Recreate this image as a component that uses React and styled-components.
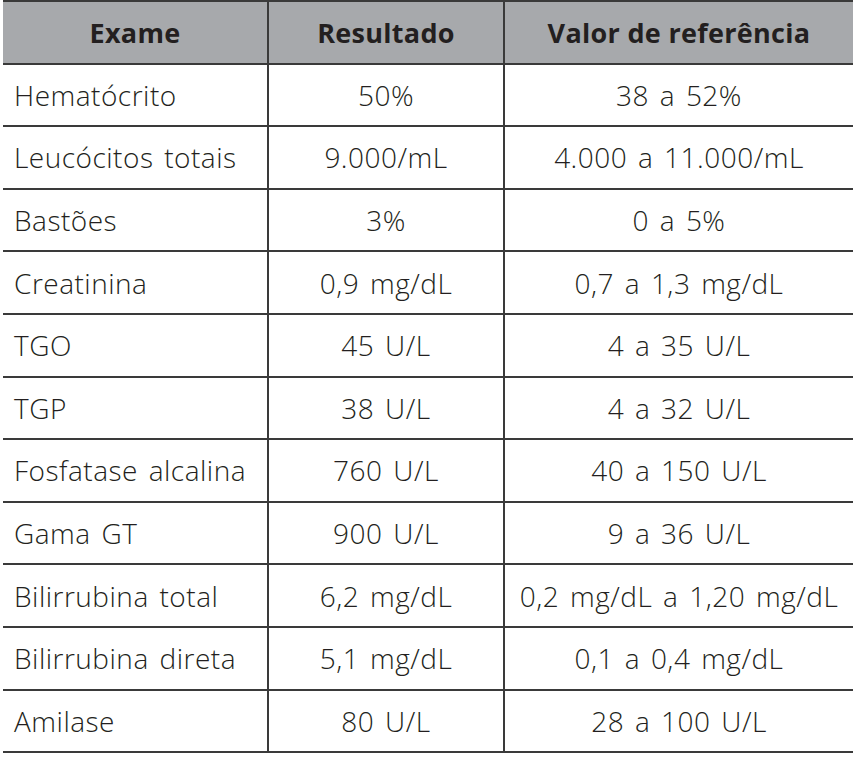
import React from "react";
import styled, { createGlobalStyle } from "styled-components";

const Global = createGlobalStyle`
  html, body { margin: 0; padding: 0; background: #ffffff; }
  body { font-family: "Open Sans", "Liberation Sans", sans-serif; color: #231f20; }
`;

const Table = styled.table`
  margin-left: 3px;
  width: 850px;
  border-collapse: collapse;
  table-layout: fixed;
  border-top: 2px solid #3a3a3a;
`;

const Row = styled.tr`
  height: 62.6px;
  border-bottom: 2px solid #3a3a3a;
  background: ${(p) => (p.$head ? "#a7a9ac" : "#ffffff")};
`;

const HeadCell = styled.th`
  padding: 0;
  font-size: 27px;
  font-weight: 700;
  color: #231f20;
  text-align: center;
  vertical-align: middle;
  border-left: ${(p) => (p.$first ? "none" : "2px solid #3a3a3a")};
  letter-spacing: 0.3px;
`;

const Cell = styled.td`
  padding: 0 0 0 ${(p) => (p.$first ? "11px" : "0")};
  font-size: 28px;
  font-weight: 350;
  color: #231f20;
  text-align: ${(p) => (p.$first ? "left" : "center")};
  vertical-align: middle;
  white-space: nowrap;
  border-left: ${(p) => (p.$first ? "none" : "2px solid #3a3a3a")};
  letter-spacing: 0.5px;
  word-spacing: 3px;
`;

const rows = [
  ["Hematócrito", "50%", "38 a 52%"],
  ["Leucócitos totais", "9.000/mL", "4.000 a 11.000/mL"],
  ["Bastões", "3%", "0 a 5%"],
  ["Creatinina", "0,9 mg/dL", "0,7 a 1,3 mg/dL"],
  ["TGO", "45 U/L", "4 a 35 U/L"],
  ["TGP", "38 U/L", "4 a 32 U/L"],
  ["Fosfatase alcalina", "760 U/L", "40 a 150 U/L"],
  ["Gama GT", "900 U/L", "9 a 36 U/L"],
  ["Bilirrubina total", "6,2 mg/dL", "0,2 mg/dL a 1,20 mg/dL"],
  ["Bilirrubina direta", "5,1 mg/dL", "0,1 a 0,4 mg/dL"],
  ["Amilase", "80 U/L", "28 a 100 U/L"],
];

export default function App() {
  return (
    <>
      <Global />
      <Table>
        <colgroup>
          <col style={{ width: 265 }} />
          <col style={{ width: 236 }} />
          <col style={{ width: 349 }} />
        </colgroup>
        <thead>
          <Row $head>
            <HeadCell $first>Exame</HeadCell>
            <HeadCell>Resultado</HeadCell>
            <HeadCell>Valor de referência</HeadCell>
          </Row>
        </thead>
        <tbody>
          {rows.map((r) => (
            <Row key={r[0]}>
              <Cell $first>{r[0]}</Cell>
              <Cell>{r[1]}</Cell>
              <Cell>{r[2]}</Cell>
            </Row>
          ))}
        </tbody>
      </Table>
    </>
  );
}
